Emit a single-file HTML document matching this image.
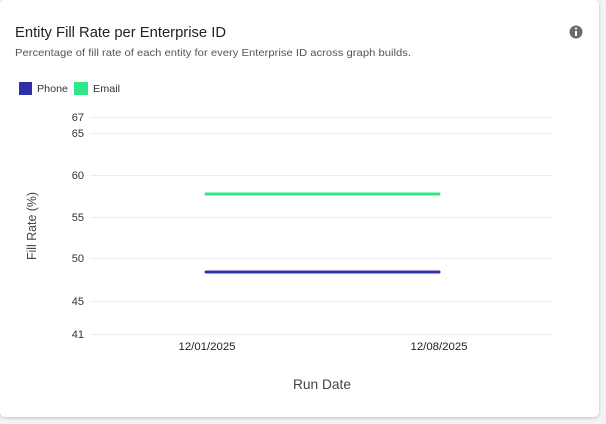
<!DOCTYPE html>
<html><head><meta charset="utf-8"><style>
html,body{margin:0;padding:0;background:#f3f3f3;width:606px;height:424px;overflow:hidden;font-family:"Liberation Sans",sans-serif;}
.card{position:absolute;left:0;top:0;width:599px;height:417px;background:#fff;border-radius:5px;box-shadow:0 1px 3px rgba(0,0,0,0.2);}
</style></head><body>
<div class="card"></div>
<svg width="606" height="424" style="position:absolute;left:0;top:0" font-family="Liberation Sans, sans-serif">
<text x="15" y="37" font-size="15" fill="#222" textLength="211" lengthAdjust="spacingAndGlyphs">Entity Fill Rate per Enterprise ID</text>
<text x="15" y="56" font-size="10.5" fill="#555" textLength="396" lengthAdjust="spacingAndGlyphs">Percentage of fill rate of each entity for every Enterprise ID across graph builds.</text>
<circle cx="576" cy="32" r="6.5" fill="#6b6b6b"/>
<rect x="575" y="31" width="2" height="5" fill="#fff"/><circle cx="576" cy="28.5" r="1.1" fill="#fff"/>
<rect x="19" y="82" width="13" height="13" fill="#2f2fa8"/>
<text x="37" y="92" font-size="10.5" fill="#333" textLength="31" lengthAdjust="spacingAndGlyphs">Phone</text>
<rect x="74" y="82" width="14" height="13" fill="#2ee887"/>
<text x="93" y="92" font-size="10.5" fill="#333" textLength="27" lengthAdjust="spacingAndGlyphs">Email</text>
<g stroke="#ececec" stroke-width="1">
<line x1="90" x2="553" y1="117.5" y2="117.5"/>
<line x1="90" x2="553" y1="133.5" y2="133.5"/>
<line x1="90" x2="553" y1="175.5" y2="175.5"/>
<line x1="90" x2="553" y1="217.5" y2="217.5"/>
<line x1="90" x2="553" y1="258.5" y2="258.5"/>
<line x1="90" x2="553" y1="301.5" y2="301.5"/>
<line x1="90" x2="553" y1="334.5" y2="334.5"/>
</g>
<g font-size="11" fill="#333" text-anchor="end">
<text x="84" y="121">67</text><text x="84" y="137">65</text><text x="84" y="179">60</text>
<text x="84" y="221">55</text><text x="84" y="262">50</text><text x="84" y="305">45</text><text x="84" y="338">41</text>
</g>
<line x1="206" x2="439" y1="194" y2="194" stroke="#2ee887" stroke-width="3" stroke-linecap="round"/>
<line x1="206" x2="439" y1="272" y2="272" stroke="#2f2fa8" stroke-width="3" stroke-linecap="round"/>
<g font-size="11" fill="#222" text-anchor="middle">
<text x="207" y="350" textLength="57" lengthAdjust="spacingAndGlyphs">12/01/2025</text><text x="439" y="350" textLength="57" lengthAdjust="spacingAndGlyphs">12/08/2025</text>
</g>
<text x="322" y="389" font-size="14" fill="#444" text-anchor="middle" textLength="58" lengthAdjust="spacingAndGlyphs">Run Date</text>
<text transform="translate(36,226) rotate(-90)" font-size="13" fill="#444" text-anchor="middle" textLength="68" lengthAdjust="spacingAndGlyphs">Fill Rate (%)</text>
</svg>
</body></html>
